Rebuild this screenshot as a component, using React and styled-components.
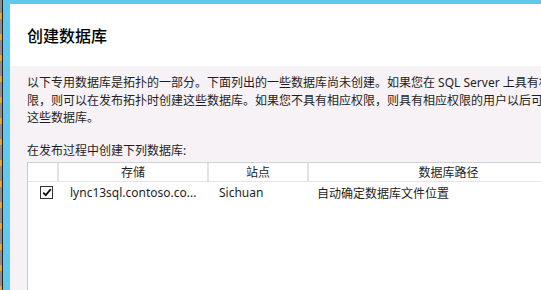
import React from 'react';
import styled, { createGlobalStyle } from 'styled-components';

const Global = createGlobalStyle`
  html, body { margin: 0; padding: 0; width: 541px; height: 290px; overflow: hidden; background: #2a2f36; }
  #root { width: 541px; height: 290px; }
`;

const Screen = styled.div`
  display: flex;
  width: 541px;
  height: 290px;
  overflow: hidden;
`;

const Desktop = styled.div`
  flex: none;
  width: 2px;
  background: repeating-linear-gradient(to bottom, #8c8c8c 0 13px, #e9a42a 13px 19px, #8c8c8c 19px 21px);
  border-right: 1px solid #222;
`;

const Frame = styled.div`
  flex: 1;
  min-width: 0;
  display: flex;
  background: #5fc9f1;
  padding: 3px 0 0 7px;
`;

const Window = styled.div`
  flex: 1;
  min-width: 0;
  display: flex;
  flex-direction: column;
  background: #fff;
  border-top: 1px solid #8fb6c6;
  overflow: hidden;
`;

const Header = styled.div`
  flex: none;
  height: 62px;
  display: flex;
  align-items: center;
  padding-left: 17px;
  box-sizing: border-box;
`;

const Title = styled.h1`
  margin: 0;
  font: 500 16px "Noto Sans CJK SC", sans-serif;
  color: #000;
`;

const Body = styled.div`
  flex: 1;
  display: flex;
  flex-direction: column;
  background: #f6f2f6;
  padding: 8px 0 0 17px;
  font: 12px "Noto Sans", "Noto Sans CJK SC", sans-serif;
  color: #1e1e1e;
`;

const Para = styled.div`
  white-space: nowrap;
  line-height: 17.5px;
  margin-bottom: ${p => p.$gap || 0}px;
`;

const Table = styled.div`
  flex: 1;
  width: 560px;
  background: #fff;
  border-top: 1px solid #d2d2d6;
  border-left: 1px solid #c8c8cc;
  margin-top: 3px;
`;

const Row = styled.div`
  display: grid;
  grid-template-columns: 29px 150px 100px 1fr;
  height: ${p => p.$head ? 18 : 21}px;
  border-bottom: ${p => p.$head ? '1px solid #e4e4ea' : 'none'};
`;

const HeadCell = styled.div`
  display: flex;
  align-items: center;
  justify-content: center;
  border-left: ${p => p.$first ? 'none' : '2px solid #e2e2ea'};
  white-space: nowrap;
`;

const Cell = styled.div`
  display: flex;
  align-items: center;
  padding-left: ${p => p.$pad || 0}px;
  white-space: nowrap;
`;

const Check = styled.span`
  width: 11px;
  height: 11px;
  border: 1px solid #333;
  background: #fff;
  display: flex;
  align-items: center;
  justify-content: center;
  margin-left: 12px;
`;

export default function App() {
  return (
    <>
      <Global />
      <Screen>
        <Desktop />
        <Frame>
          <Window>
            <Header>
              <Title>创建数据库</Title>
            </Header>
            <Body>
              <Para>以下专用数据库是拓扑的一部分。下面列出的一些数据库尚未创建。如果您在 SQL Server 上具有相应权</Para>
              <Para>限，则可以在发布拓扑时创建这些数据库。如果您不具有相应权限，则具有相应权限的用户以后可以创建</Para>
              <Para $gap={15}>这些数据库。</Para>
              <Para>在发布过程中创建下列数据库:</Para>
              <Table>
                <Row $head>
                  <HeadCell $first />
                  <HeadCell>存储</HeadCell>
                  <HeadCell>站点</HeadCell>
                  <HeadCell>数据库路径</HeadCell>
                </Row>
                <Row>
                  <Cell>
                    <Check>
                      <svg width="10" height="9" viewBox="0 0 10 9">
                        <path d="M1.2 4.6 L3.8 7.2 L8.8 1.2" fill="none" stroke="#111" strokeWidth="1.8" />
                      </svg>
                    </Check>
                  </Cell>
                  <Cell $pad={13}>lync13sql.contoso.co...</Cell>
                  <Cell $pad={12}>Sichuan</Cell>
                  <Cell $pad={10}>自动确定数据库文件位置</Cell>
                </Row>
              </Table>
            </Body>
          </Window>
        </Frame>
      </Screen>
    </>
  );
}
